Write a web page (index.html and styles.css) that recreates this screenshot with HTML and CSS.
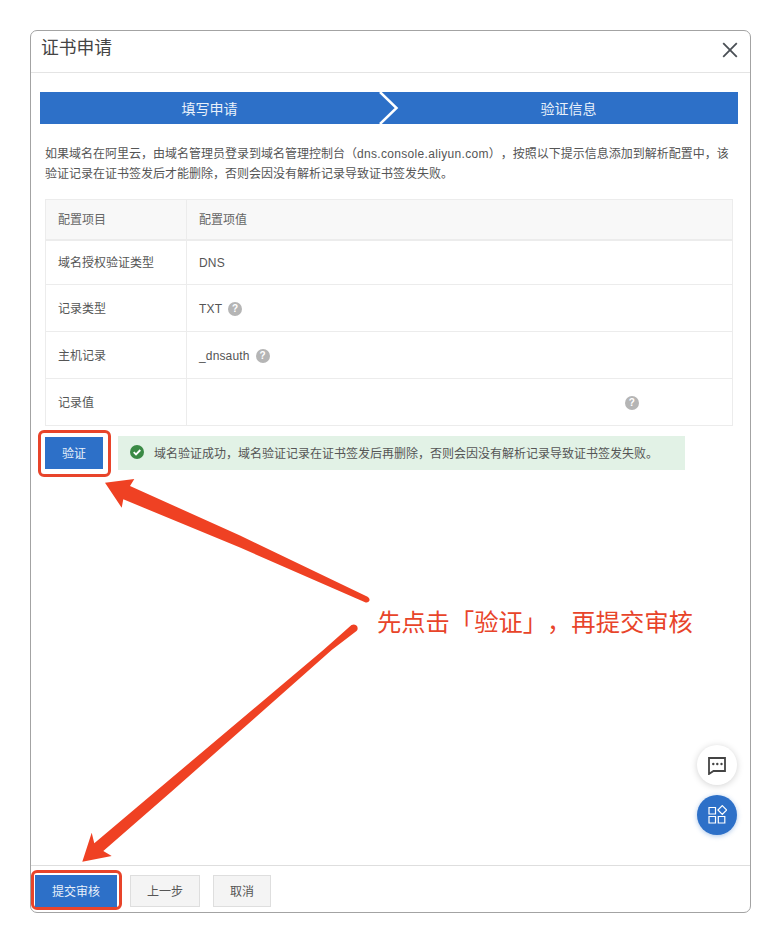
FILE: index.html
```html
<!DOCTYPE html>
<html lang="zh">
<head>
<meta charset="utf-8">
<title>证书申请</title>
<link rel="stylesheet" href="styles.css">
</head>
<body>
<div class="modal">
  <header class="modal-head">
    <h1 class="modal-title">证书申请</h1>
    <svg class="close" width="16" height="16" viewBox="0 0 16 16"><path d="M1.200 1.200 14.800 14.800M14.800 1.200 1.200 14.800"/></svg>
  </header>
  <main class="modal-body">
    <div class="steps">
      <div class="step">填写申请</div>
      <svg class="chevron" width="20" height="32" viewBox="0 0 20 32"><path d="M1 0 17.500 16 1 32"/></svg>
      <div class="step">验证信息</div>
    </div>
    <p class="intro"><span class="line">如果域名在阿里云，由域名管理员登录到域名管理控制台（<span class="latin">dns.console.aliyun.com</span>），按照以下提示信息添加到解析配置中，该</span><span class="line">验证记录在证书签发后才能删除，否则会因没有解析记录导致证书签发失败。</span></p>
    <table class="config">
      <thead>
        <tr class="row-head"><th class="col-key">配置项目</th><th>配置项值</th></tr>
      </thead>
      <tbody>
        <tr class="row-first"><td>域名授权验证类型</td><td><span class="val">DNS</span></td></tr>
        <tr class="row"><td>记录类型</td><td><span class="val">TXT<span class="help">?</span></span></td></tr>
        <tr class="row"><td>主机记录</td><td><span class="val">_dnsauth<span class="help">?</span></span></td></tr>
        <tr class="row"><td>记录值</td><td><span class="val"><span class="help help-end">?</span></span></td></tr>
      </tbody>
    </table>
    <div class="verify-row">
      <span class="ring ring-verify"><button class="btn btn-primary btn-verify">验证</button></span>
      <div class="alert">
        <svg class="alert-icon" width="14" height="14" viewBox="0 0 14 14"><circle cx="7" cy="7" r="7"/><path d="M3.700 7.200 6 9.400 10.300 5"/></svg>
        <span>域名验证成功，域名验证记录在证书签发后再删除，否则会因没有解析记录导致证书签发失败。</span>
      </div>
    </div>
  </main>
  <footer class="modal-foot">
    <span class="ring ring-submit"><button class="btn btn-primary btn-submit">提交审核</button></span>
    <button class="btn btn-default btn-prev">上一步</button>
    <button class="btn btn-default btn-cancel">取消</button>
  </footer>
</div>

<div class="fab fab-chat">
  <svg width="20" height="20" viewBox="0 0 20 20"><path class="chat-line" d="M2 3h16v13H6.500L2 19z"/><circle class="chat-dot" cx="6.300" cy="9" r="1.200"/><circle class="chat-dot" cx="10.300" cy="9" r="1.200"/><circle class="chat-dot" cx="14.500" cy="9" r="1.200"/></svg>
</div>
<div class="fab fab-apps">
  <svg width="20" height="20" viewBox="0 0 20 20"><path class="apps-line" d="M2 2.500h6.500v6.500H2zM2 11.500h6.500v6.500H2zM11.300 11.500h6.500v6.500h-6.500zM15.300 .6l4.400 4.400-4.400 4.400-4.400-4.400z"/></svg>
</div>

<svg class="arrows" width="781" height="943" viewBox="0 0 781 943">
  <path d="M105 482.700 134.300 479 130 486 240 535.500 366 596Q370 597.500 369.500 600.500 368 603.500 364.500 602L240 547.500 123.300 499.300 121.700 507.700Z"/>
  <path d="M82.300 861.700 91.700 832.700 94.300 843.300 157.300 790 323.300 650 351.500 625Q355 623.500 357 626 358.500 629 356.500 631L331.700 650 173.300 790 103.300 851 111.700 856Z"/>
</svg>
<div class="note">先点击「验证」，再提交审核</div>
</body>
</html>
```
FILE: styles.css
```css
* { box-sizing: border-box; }
html, body { margin: 0; padding: 0; }
body {
  width: 781px;
  height: 943px;
  padding: 30px 30px 0;
  background: #fff;
  font-family: "Liberation Sans", "Noto Sans CJK SC", sans-serif;
  font-size: 12px;
  color: #555;
  position: relative;
  overflow: hidden;
  text-spacing-trim: space-all;
}
.modal {
  width: 721px;
  height: 883px;
  border: 1px solid #a3a3a3;
  border-radius: 7px;
  display: flex;
  flex-direction: column;
  background: #fff;
}
.modal-head {
  height: 42px;
  flex: none;
  border-bottom: 1px solid #e4e4e4;
  display: flex;
  align-items: center;
  justify-content: space-between;
  padding: 0 12px 0 10px;
}
.modal-title {
  margin: 0 0 12px;
  font-size: 17.800px;
  font-weight: 400;
  color: #444;
}
.close { margin-bottom: 3px; }
.close path { fill: none; stroke: #4a4f55; stroke-width: 1.800; }
.modal-body {
  flex: 1;
  padding: 19px 12px 0 9px;
}
.steps {
  height: 32px;
  display: flex;
  background: #2d70c8;
  color: #e8f0fa;
  font-size: 14px;
}
.step {
  flex: 1;
  display: flex;
  align-items: center;
  justify-content: center;
}
.chevron { flex: none; }
.chevron path { fill: none; stroke: #fff; stroke-width: 2.500; }
.intro {
  margin: 20px 5px 0;
  width: 688px;
  line-height: 20px;
  color: #555;
}
.line { display: block; white-space: nowrap; }
.latin { letter-spacing: .32px; }
.config {
  margin: 15px 0 0 5px;
  width: 688px;
  border-collapse: collapse;
  table-layout: fixed;
  color: #555;
}
.config th, .config td {
  border: 1px solid #ececec;
  padding: 0 12px;
  text-align: left;
  font-weight: 400;
}
.config td:first-child, .config th { padding-bottom: 1px; }
.col-key { width: 141px; }
.row-head { height: 40px; background: #f8f8f8; }
.row-head th { border-bottom-width: 2px; color: #666; }
.row-first { height: 45px; }
.row { height: 47px; }
.val { display: flex; align-items: center; padding-top: 2px; letter-spacing: .15px; }
.help {
  flex: none;
  width: 14px;
  height: 14px;
  margin-left: 6px;
  border-radius: 50%;
  background: #b5b5b5;
  color: #fff;
  font-size: 10px;
  font-weight: 700;
  line-height: 14px;
  text-align: center;
}
.help-end { margin-left: 426px; }
.verify-row {
  display: flex;
  align-items: flex-start;
  margin: 4px 0 0 -2px;
}
.ring {
  display: flex;
  flex: none;
  border: 3px solid #e8442a;
  border-radius: 6px;
  background: #fff;
}
.ring-verify { padding: 4px 5px 5px 4px; }
.ring-submit { padding: 2px 2px 0 1px; height: 40px; }
.btn {
  height: 32px;
  padding: 0 0 2px;
  font: inherit;
  border-radius: 0;
  display: block;
}
.btn-primary { background: #2d70c8; color: #e8f0fa; border: 0; }
.btn-default { background: #f4f4f4; color: #555; border: 1px solid #dedede; }
.btn-verify { width: 58px; }
.btn-submit { width: 82px; }
.btn-prev { width: 70px; margin: 5px 0 0 8px; }
.btn-cancel { width: 58px; margin: 5px 0 0 13px; }
.alert {
  margin: 6px 0 0 7px;
  width: 567px;
  height: 34px;
  background: #e2f2e6;
  display: flex;
  align-items: center;
  padding: 0 0 2px 12px;
  gap: 10px;
  color: #555;
}
.alert-icon circle { fill: #3a8a45; }
.alert-icon path { fill: none; stroke: #fff; stroke-width: 1.800; }
.modal-foot {
  flex: none;
  height: 47px;
  border-top: 1px solid #dedede;
  display: flex;
  align-items: flex-start;
  padding: 4px 0 0;
}
.fab {
  position: absolute;
  left: 697px;
  width: 40px;
  height: 40px;
  border-radius: 50%;
  display: flex;
  align-items: center;
  justify-content: center;
}
.fab-chat { top: 745px; background: #fff; box-shadow: 0 1px 7px rgba(0,0,0,.18); }
.fab-apps { top: 795px; background: #2d70c8; box-shadow: 0 1px 5px rgba(45,112,200,.4); }
.chat-line { fill: none; stroke: #444; stroke-width: 1.800; }
.chat-dot { fill: #444; }
.apps-line { fill: none; stroke: #fff; stroke-width: 1.200; }
.arrows { position: absolute; left: 0; top: 0; pointer-events: none; }
.arrows path { fill: #ef4123; }
.note {
  position: absolute;
  left: 377px;
  top: 607px;
  font-size: 24.300px;
  line-height: 32px;
  color: #e8442a;
  white-space: nowrap;
}
```
